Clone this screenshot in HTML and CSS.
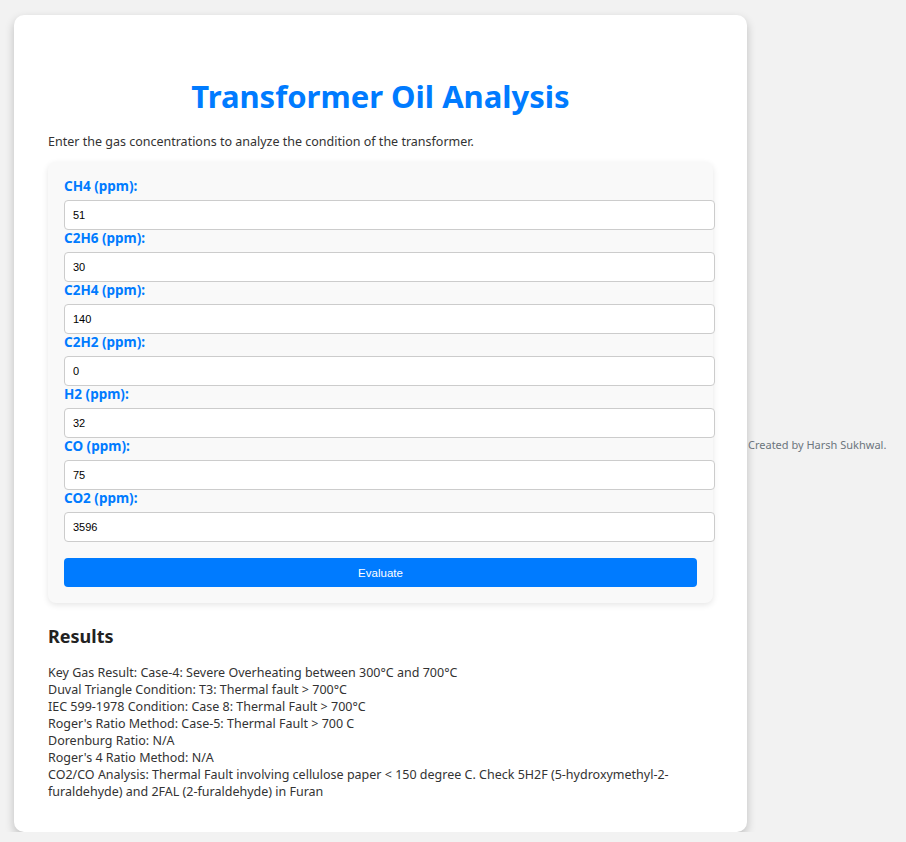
FILE: index.html
```html
<!DOCTYPE html>
<html lang="en">
<head>
<meta charset="utf-8">
<title>Transformer Oil Analysis</title>
<link rel="stylesheet" href="styles.css">
</head>
<body>
<div class="card">
  <h1 class="title">Transformer Oil Analysis</h1>
  <p class="intro">Enter the gas concentrations to analyze the condition of the transformer.</p>
  <form class="gas-form">
    <label class="field-label" for="ch4">CH4 (ppm):</label>
    <input class="field-input" id="ch4" type="text" value="51">
    <label class="field-label" for="c2h6">C2H6 (ppm):</label>
    <input class="field-input" id="c2h6" type="text" value="30">
    <label class="field-label" for="c2h4">C2H4 (ppm):</label>
    <input class="field-input" id="c2h4" type="text" value="140">
    <label class="field-label" for="c2h2">C2H2 (ppm):</label>
    <input class="field-input" id="c2h2" type="text" value="0">
    <label class="field-label" for="h2">H2 (ppm):</label>
    <input class="field-input" id="h2" type="text" value="32">
    <label class="field-label" for="co">CO (ppm):</label>
    <input class="field-input" id="co" type="text" value="75">
    <label class="field-label" for="co2">CO2 (ppm):</label>
    <input class="field-input" id="co2" type="text" value="3596">
    <button class="evaluate-btn" type="button">Evaluate</button>
  </form>
  <h2 class="results-title">Results</h2>
  <div class="results">
    <div>Key Gas Result: Case-4: Severe Overheating between 300°C and 700°C</div>
    <div>Duval Triangle Condition: T3: Thermal fault &gt; 700°C</div>
    <div>IEC 599-1978 Condition: Case 8: Thermal Fault &gt; 700°C</div>
    <div>Roger's Ratio Method: Case-5: Thermal Fault &gt; 700 C</div>
    <div>Dorenburg Ratio: N/A</div>
    <div>Roger's 4 Ratio Method: N/A</div>
    <div>CO2/CO Analysis: Thermal Fault involving cellulose paper &lt; 150 degree C. Check 5H2F (5-hydroxymethyl-2-furaldehyde) and 2FAL (2-furaldehyde) in Furan</div>
  </div>
</div>
<footer class="footer">Created by Harsh Sukhwal.</footer>
</body>
</html>
```

FILE: styles.css
```css
html, body {
  margin: 0;
  padding: 0;
}
body {
  background: #f2f2f2;
  font-family: "Noto Sans", "Open Sans", sans-serif;
  font-size: 12.5px;
  color: #333;
  display: flex;
  align-items: flex-start;
  padding: 15px 0 0 14px;
  overflow: hidden;
}
.card {
  width: 665px;
  background: #fff;
  border-radius: 10px;
  box-shadow: 0 4px 10px rgba(0, 0, 0, 0.22);
  padding: 61px 34px 32px;
}
.title {
  margin: 0 0 17px;
  text-align: center;
  color: #007bff;
  font-size: 31px;
  line-height: 40px;
  font-weight: 700;
}
.intro {
  margin: 0 0 12px;
  line-height: 17px;
}
.gas-form {
  display: flex;
  flex-direction: column;
  background: #f9f9f9;
  border-radius: 8px;
  box-shadow: 0 2px 6px rgba(0, 0, 0, 0.1);
  padding: 16px;
}
.field-label {
  color: #007bff;
  font-weight: 700;
  font-size: 13.5px;
  line-height: 17px;
  margin-bottom: 5px;
}
.field-input {
  width: 100%;
  height: 28px;
  padding: 0 8px;
  border: 1px solid #ccc;
  border-radius: 4px;
  background: #fff;
  font-family: "Liberation Sans", Arial, sans-serif;
  font-size: 11px;
  color: #000;
}
.evaluate-btn {
  margin-top: 16px;
  height: 29px;
  border: none;
  border-radius: 4px;
  background: #007bff;
  color: #fff;
  font-family: "Liberation Sans", Arial, sans-serif;
  font-size: 11.5px;
}
.results-title {
  margin: 21px 0 16px;
  font-size: 18px;
  line-height: 24px;
  font-weight: 700;
  color: #222;
}
.results {
  line-height: 17px;
}
.footer {
  align-self: center;
  margin-top: 43px;
  margin-left: 1px;
  color: #6c757d;
  font-size: 11px;
  line-height: 16px;
}
```
